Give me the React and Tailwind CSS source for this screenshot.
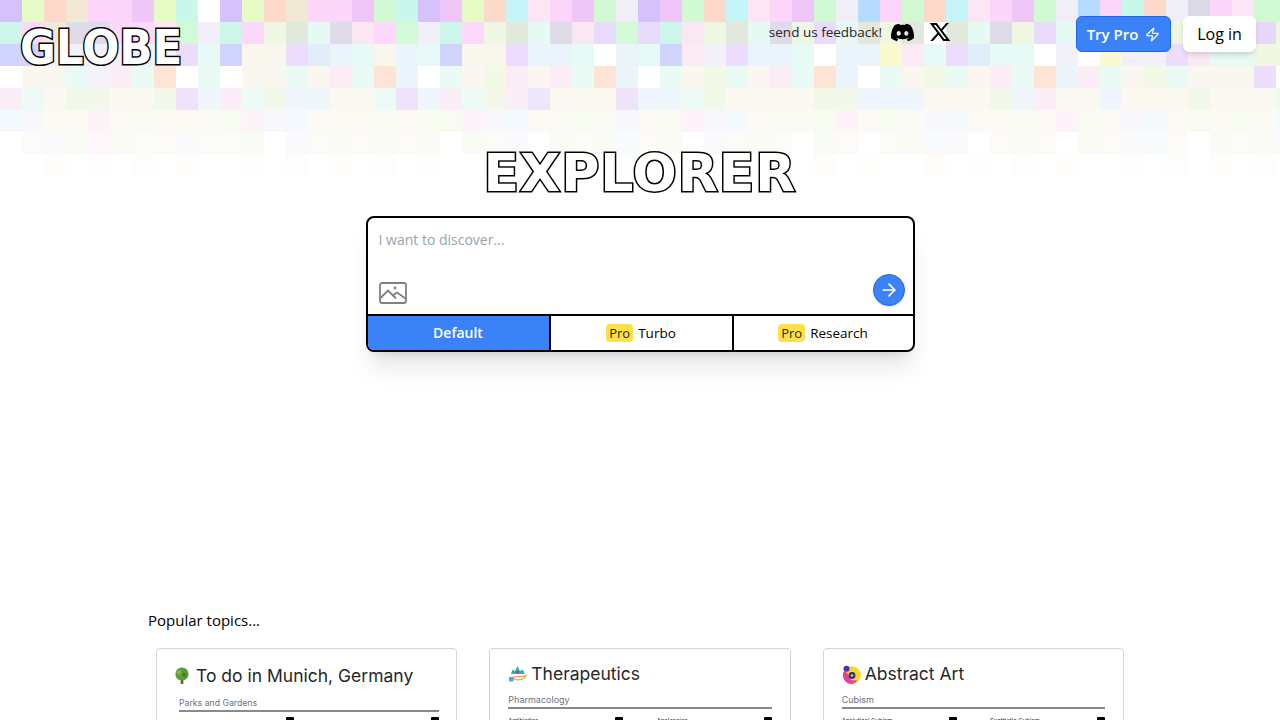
import React from "react";
import { ArrowRight, Zap } from "lucide-react";
import { FaDiscord } from "react-icons/fa6";
import { RiTwitterXLine } from "react-icons/ri";

const PALETTE = {
  p: "#d6c2fa", v: "#eec6f8", g: "#e6fbc6", o: "#fdd9c9", c: "#f1e9d6", k: "#fcd5fa",
  m: "#c9f7ea", w: "#ffffff", b: "#c9cdfc", s: "#b5dcfc", t: "#c6f4f9", e: "#d0f9d4",
  r: "#fbe6f3", l: "#f0eff8", h: "#ddd9e8", d: "#dfe8da", f: "#eef7e0", n: "#e4faf4",
  u: "#e8d8fb", a: "#e8f2fb", q: "#f8f5ea", y: "#fbf8c8", O: "#fddcc8", U: "#e8d4fa", x: "#dcebf8",
};

const ROWS = [
  ["pgockkvgmwpgockkvemp" + "vgotrkvelpveotrkvel" + "skeotrkvelskmolhkree", 1],
  ["mkchhkkrelmkfdnhrkel" + "mkfdnhrueumrfdnhfun" + "dfdwdnhfunhnfefrnfUf", 0.92],
  ["bbllllllunbqquxanqan" + "bqquaanwanbrluaanwa" + "ayrnuxnnwlwyllurnnff", 0.85],
  ["wqqnlrnOwnwqqnqrnOaw" + "nqfrqrnOawnqfnqrnOa" + "wnqfnqrnOarnqfnqqqUw", 0.75],
  ["rnqffqqfUarnfaaqqnUa" + "rnfruqqqUaanfqqqqff" + "aaaqqqfarqqaqqqfqqqf", 0.65],
  ["alqqrqfqqqfrlaqqqfqf" + "frlaqqfqlqfrlaqfqfr" + "qfqlaqqfqrfqlaqfqfqa", 0.45],
  ["wqlfrfqqlqqfwlqfqfqf" + "wfqlwfqfaqfwlqfqwfq" + "wqfalwqfqwfqlaqwfqfl", 0.3],
  ["wwqwlwfwqwwfwlwqwfwq" + "wwfwlwqwfwwqwfwlwqw" + "fwwqwlwfwqwwfwlwqwfw", 0.1],
];

function Mosaic() {
  return (
    <div className="absolute left-0 top-0 flex flex-col">
      {ROWS.map(([row, opacity], y) => (
        <div key={y} className="flex" style={{ opacity }}>
          {row.split("").map((ch, x) => (
            <div key={x} className="h-[22px] w-[22px] shrink-0" style={{ backgroundColor: PALETTE[ch] }} />
          ))}
        </div>
      ))}
    </div>
  );
}

function TreeIcon() {
  return (
    <svg width="18" height="18" viewBox="0 0 18 18" className="shrink-0">
      <rect x="7.7" y="10" width="2.6" height="7" fill="#7a5230" />
      <circle cx="9" cy="7" r="6.6" fill="#5d9c3a" />
      <circle cx="6" cy="5.5" r="2.2" fill="#7fbb52" />
      <circle cx="11.5" cy="8" r="2.2" fill="#477f2b" />
    </svg>
  );
}

function LotusIcon() {
  return (
    <svg width="19" height="18" viewBox="0 0 19 18" className="shrink-0">
      <path d="M9.5 1 12 6 15 4.5 16.5 9H3L4.5 4.5 7 6Z" fill="#2fb5a5" />
      <circle cx="9.5" cy="7" r="1.6" fill="#c43a7a" />
      <path d="M5 12.5C9 10.5 13 13 18 10.5 16 14.5 12 15.5 7 14.5Z" fill="none" stroke="#f0a050" strokeWidth="1.2" />
      <rect x="1" y="12" width="4.5" height="4.5" rx="1" fill="#5b9be0" />
    </svg>
  );
}

function ArtIcon() {
  return (
    <svg width="19" height="19" viewBox="0 0 19 19" className="shrink-0">
      <circle cx="10" cy="10" r="8.8" fill="#f8d820" />
      <path d="M2 6a8.8 8.8 0 0 0 9 12.8c2-.8 3.5-2 4-3.5-3 0-5 .5-6.5-1S7 8 2 6Z" fill="#e83d9c" />
      <circle cx="10" cy="10.5" r="3.4" fill="#2a2a9c" />
      <circle cx="10" cy="10.5" r="1.3" fill="#f8d820" />
      <circle cx="4.5" cy="3.8" r="3" fill="#3a3aa8" />
    </svg>
  );
}

function ImageIcon() {
  return (
    <svg width="28" height="22" viewBox="0 0 28 22" fill="none" stroke="#808080" strokeWidth="1.8" strokeLinejoin="round" className="mb-[4px] shrink-0">
      <rect x="1" y="1" width="26" height="20" rx="2" />
      <path d="M1.5 16 9 8.5l8 8M14 13.5l4-3 8.5 6" />
      <circle cx="16" cy="6" r="1.4" fill="#808080" stroke="none" />
    </svg>
  );
}

function Item({ name, first }) {
  return (
    <div className="flex w-[115px] items-start justify-between">
      <span className={`text-[6px] leading-[8px] text-gray-800 ${first ? "pt-[5px]" : ""}`}>{name}</span>
      <span className="h-2 w-2 rounded-[1px] bg-black" />
    </div>
  );
}

function Card({ icon, title, section, items, first }) {
  return (
    <div className={`h-[90px] rounded border border-gray-300 bg-white font-['Inter',sans-serif] ${first ? "pl-4 pr-4 pt-[15px]" : "pl-[18px] pr-[18px] pt-[13px]"}`}>
      <div className={`flex items-center ${first ? "gap-[5px]" : "gap-[4px]"}`}>
        {icon}
        <span className="text-[17.5px] leading-6 text-[#27272a]">{title}</span>
      </div>
      <div className={first ? "ml-[6px] mr-[1px] mt-[9px]" : "mt-[8px]"}>
        <div className={`${first ? "text-[8.7px]" : "text-[9px]"} leading-[12px] text-gray-500`}>{section}</div>
        <div className="mt-[1px] h-[2px] bg-[#8a8a8a]" />
        <div className={`flex justify-between ${first ? "mt-[5px]" : "mt-[8px]"}`}>
          <Item name={items[0]} first={first} />
          <Item name={items[1]} first={first} />
        </div>
      </div>
    </div>
  );
}

function Pro() {
  return <span className="rounded bg-[#fde047] px-[3px] text-[13px] leading-[18px] text-gray-800">Pro</span>;
}

export default function App() {
  const logoText = "font-['DejaVu_Sans',sans-serif] font-bold text-white [-webkit-text-stroke:3px_black] [paint-order:stroke_fill] select-none whitespace-nowrap";
  return (
    <div className="relative h-[720px] w-full overflow-hidden bg-white font-['Open_Sans',sans-serif] text-black">
      <Mosaic />

      <div className="relative flex flex-col">
        <header className="flex items-start justify-between pl-5 pr-6 pt-4">
          <div className={`${logoText} mt-[10px] h-[42px] origin-left scale-x-[0.91] text-[48px] leading-[42px]`}>GLOBE</div>
          <div className="flex items-start">
            <div className="mr-[124px] flex items-center">
              <span className="text-[13.5px] font-medium leading-8 text-[#27272a]">send us feedback!</span>
              <FaDiscord className="ml-2 text-[25px] text-black" />
              <RiTwitterXLine className="ml-[13px] text-[24px] text-black" />
            </div>
            <button className="flex h-9 w-[95px] items-center justify-center gap-[7px] rounded-md border border-[#2563eb] bg-[#3b82f6] text-[15px] font-semibold text-white">
              Try Pro
              <Zap size={15} />
            </button>
            <button className="ml-3 h-9 w-[73px] rounded-md bg-white text-base font-medium text-black shadow-md">Log in</button>
          </div>
        </header>

        <div className={`${logoText} mt-[81px] h-[48px] self-center text-center text-[52px] leading-[48px] tracking-[1px]`}>EXPLORER</div>

        <div className="mx-auto mt-[19px] w-[549px] overflow-hidden rounded-lg border-2 border-black bg-white shadow-xl">
          <div className="flex h-[96px] flex-col justify-between pl-[11px] pr-2 pt-[12px]">
            <div className="text-sm leading-5 text-gray-400">I want to discover...</div>
            <div className="flex items-end justify-between pb-[6px]">
              <ImageIcon />
              <button className="mb-[2px] flex h-8 w-8 items-center justify-center rounded-full border border-[#2563eb] bg-[#3b82f6] text-white shadow">
                <ArrowRight size={20} />
              </button>
            </div>
          </div>
          <div className="flex h-9 border-t-2 border-black text-[13.5px] font-semibold">
            <div className="flex w-[183px] items-center justify-center border-r-2 border-black bg-[#3b82f6] text-sm text-white">Default</div>
            <div className="flex w-[183px] items-center justify-center gap-[5px] border-r-2 border-black font-medium"><Pro />Turbo</div>
            <div className="flex flex-1 items-center justify-center gap-[5px] font-medium"><Pro />Research</div>
          </div>
        </div>

        <div className="mx-auto mt-[256px] w-[984px]">
          <div className="text-[15px] leading-6">Popular topics...</div>
          <div className="mt-[16px] grid grid-cols-3 gap-8 px-2">
            <Card first icon={<TreeIcon />} title="To do in Munich, Germany" section="Parks and Gardens" items={["Englischer Garten", "Hofgarten"]} />
            <Card icon={<LotusIcon />} title="Therapeutics" section="Pharmacology" items={["Antibiotics", "Analgesics"]} />
            <Card icon={<ArtIcon />} title="Abstract Art" section="Cubism" items={["Analytical Cubism", "Synthetic Cubism"]} />
          </div>
        </div>
      </div>
    </div>
  );
}
